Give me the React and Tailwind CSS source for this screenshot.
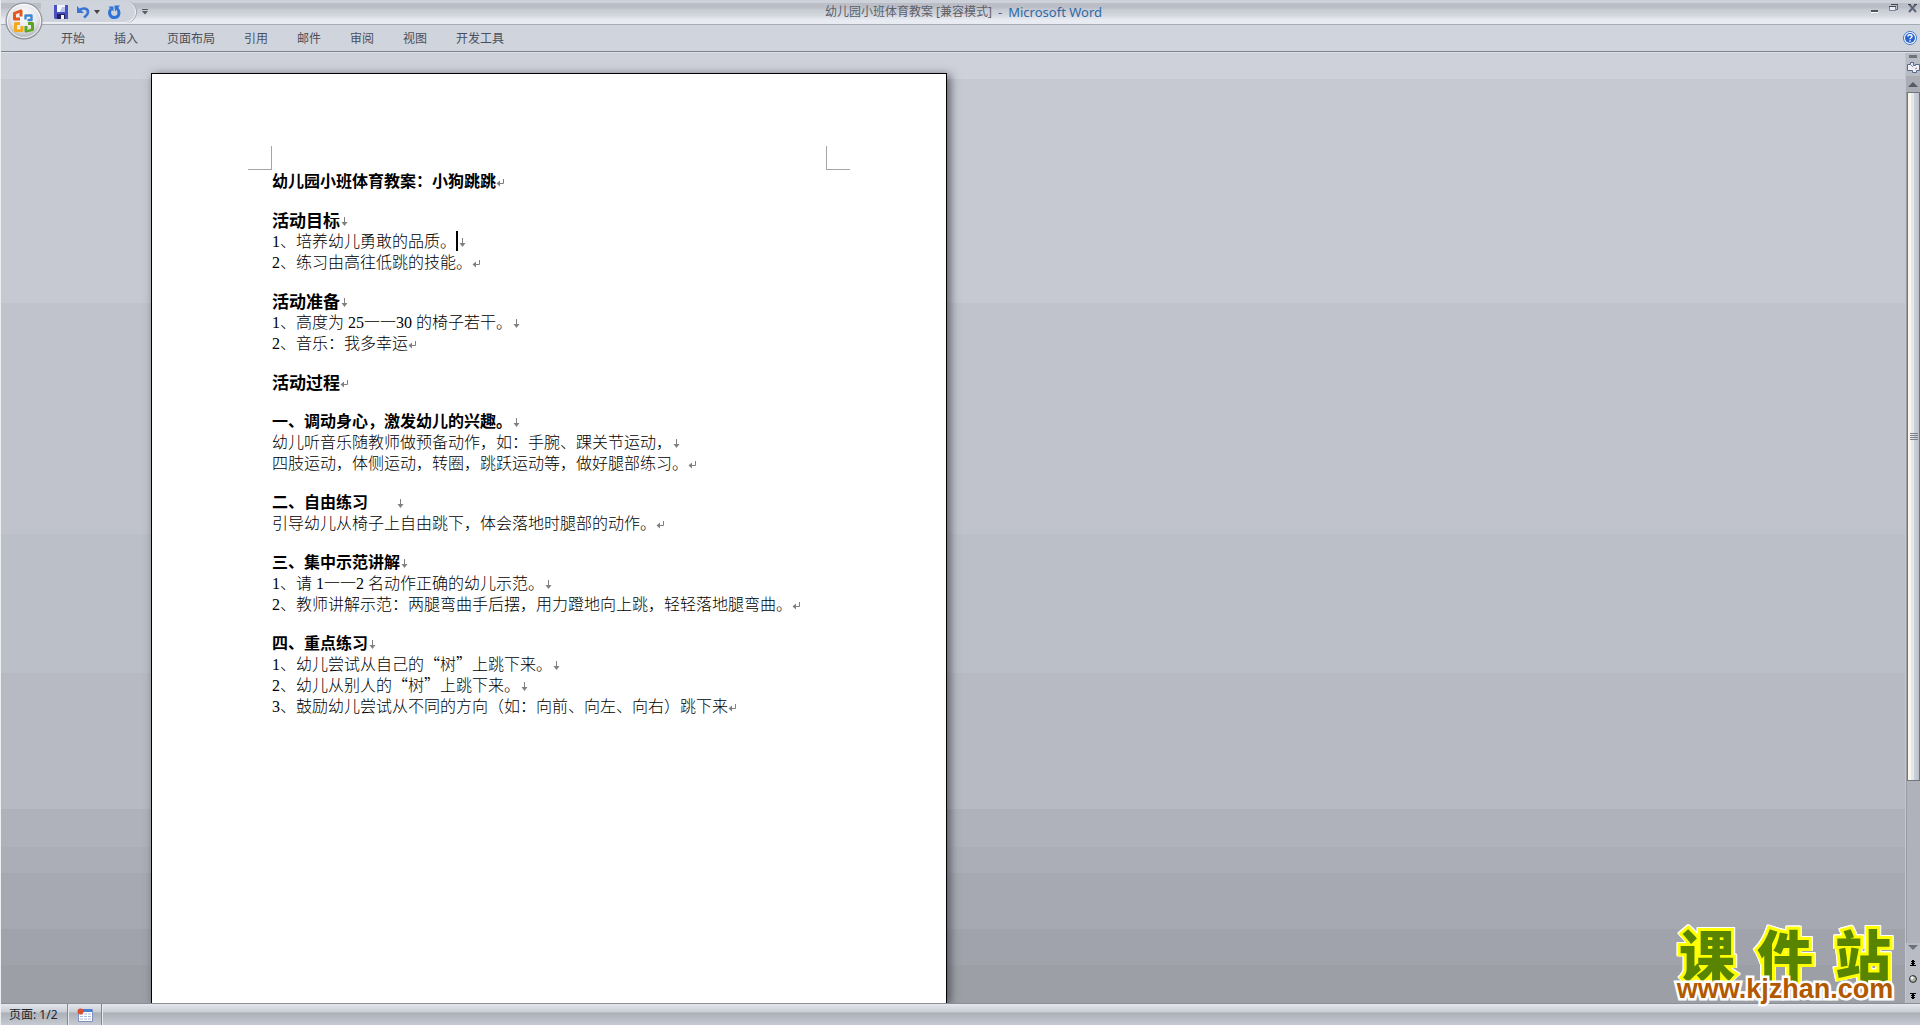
import React from 'react';

const tabs = ['开始', '插入', '页面布局', '引用', '邮件', '审阅', '视图', '开发工具'];

// mark: 'p' = paragraph end, 'br' = manual line break
const sections = [
  { lines: [{ text: '幼儿园小班体育教案：小狗跳跳', bold: true, mark: 'p' }] },
  {
    lines: [
      { text: '活动目标', bold: true, large: true, mark: 'br' },
      { text: '1、培养幼儿勇敢的品质。', caret: true, mark: 'br' },
      { text: '2、练习由高往低跳的技能。', mark: 'p' },
    ],
  },
  {
    lines: [
      { text: '活动准备', bold: true, large: true, mark: 'br' },
      { text: '1、高度为 25一一30 的椅子若干。', mark: 'br' },
      { text: '2、音乐：我多幸运', mark: 'p' },
    ],
  },
  { lines: [{ text: '活动过程', bold: true, large: true, mark: 'p' }] },
  {
    lines: [
      { text: '一、调动身心，激发幼儿的兴趣。', bold: true, mark: 'br' },
      { text: '幼儿听音乐随教师做预备动作，如：手腕、踝关节运动，', mark: 'br' },
      { text: '四肢运动，体侧运动，转圈，跳跃运动等，做好腿部练习。', mark: 'p' },
    ],
  },
  {
    lines: [
      { text: '二、自由练习', bold: true, tab: true, mark: 'br' },
      { text: '引导幼儿从椅子上自由跳下，体会落地时腿部的动作。', mark: 'p' },
    ],
  },
  {
    lines: [
      { text: '三、集中示范讲解', bold: true, mark: 'br' },
      { text: '1、请 1一一2 名动作正确的幼儿示范。', mark: 'br' },
      { text: '2、教师讲解示范：两腿弯曲手后摆，用力蹬地向上跳，轻轻落地腿弯曲。', mark: 'p' },
    ],
  },
  {
    lines: [
      { text: '四、重点练习', bold: true, mark: 'br' },
      { text: '1、幼儿尝试从自己的“树”上跳下来。', mark: 'br' },
      { text: '2、幼儿从别人的“树”上跳下来。', mark: 'br' },
      { text: '3、鼓励幼儿尝试从不同的方向（如：向前、向左、向右）跳下来', mark: 'p' },
    ],
  },
];

const Mark = ({ type }) => (
  <svg width="8" height="10" viewBox="0 0 8 10" className="mt-1 shrink-0" fill="none" stroke="#808080" aria-hidden="true">
    {type === 'p' ? (
      <>
        <path d="M7.500 1v4.500H2" />
        <path d="M4 2.500v6L0.500 5.500z" fill="#808080" stroke="none" />
      </>
    ) : (
      <>
        <path d="M4.500 0v7" />
        <path d="M1.500 5h6L4.500 9z" fill="#808080" stroke="none" />
      </>
    )}
  </svg>
);

// Latin digits and the spaces beside them use the half-width serif face
const MixedText = ({ text }) =>
  text.split(/([0-9 ]+)/).map((part, idx) =>
    /^[0-9 ]+$/.test(part) ? (
      <span key={idx} className="font-['Liberation_Serif',serif]">{part}</span>
    ) : (
      <React.Fragment key={idx}>{part}</React.Fragment>
    )
  );

const Line = ({ line }) => (
  <p
    className={`flex h-[21px] items-center whitespace-pre leading-[21px] text-black
      ${line.bold ? 'font-bold' : 'font-light'}
      ${line.large ? 'text-[17px]' : 'text-base'}`}
  >
    <span><MixedText text={line.text} /></span>
    {line.tab && <span className="w-7" />}
    {line.caret && <span className="h-5 w-0.5 bg-black" />}
    <Mark type={line.mark} />
  </p>
);

const OfficeOrb = () => (
  <button aria-label="Office" className="absolute top-0.5 left-1 z-10">
    <svg width="38" height="38" viewBox="0 0 38 38">
      <defs>
        <radialGradient id="orb" cx="50%" cy="35%" r="65%">
          <stop offset="0" stopColor="#fdfdfe" />
          <stop offset="0.600" stopColor="#e4e5e9" />
          <stop offset="1" stopColor="#a9abb2" />
        </radialGradient>
      </defs>
      <circle cx="19" cy="19" r="18" fill="url(#orb)" stroke="#85878f" />
      <circle cx="19" cy="19" r="16.500" fill="none" stroke="#fff" strokeOpacity="0.800" />
      <g fill="none" strokeWidth="3" strokeLinejoin="round">
        <path d="M15 17H9.500v-5.500L16 9v5.500" stroke="#e4561c" />
        <path d="M20.500 17.500v-4h6v4.500h-4" stroke="#3f86cf" strokeWidth="2.400" />
        <path d="M15 21.500h-4.500v7H17V24" stroke="#f4a81c" />
        <path d="M21 24v5l6.500-1.500v-6H23" stroke="#5aa51e" />
      </g>
      <path d="M11 12.500l3.500-1.300M12 27h3M22 27.500l4-.8" stroke="#fff" strokeOpacity="0.600" />
    </svg>
  </button>
);

const QuickAccess = () => (
  <div className="flex h-full items-center">
    <div className="ml-10 flex h-[22px] w-[95px] items-center rounded-r-full border-r border-b border-[#eef0f4] bg-[#cfd3dc] pl-[13px] shadow-[1px_0_0_#a3a7b1]">
      <button aria-label="保存">
        <svg width="14" height="14" viewBox="0 0 14 14">
          <path d="M0 0h14v14H1l-1-1z" fill="#4a50c0" />
          <path d="M3 0h8v7H3z" fill="#f2f5fd" />
          <path d="M8 2h3v5H6z" fill="#b8c4ea" />
          <path d="M3 9h8v5H3z" fill="#23235f" />
          <path d="M7 10h3v4H7z" fill="#f4f5fb" />
        </svg>
      </button>
      <button aria-label="撤消" className="ml-2">
        <svg width="14" height="14" viewBox="0 0 14 14">
          <path d="M3 6c3-4 9-3 9 1 0 2-2 4-4 5.500" fill="none" stroke="#3a74d4" strokeWidth="2.600" />
          <path d="M1 1v7h7z" fill="#3a74d4" />
        </svg>
      </button>
      <button aria-label="撤消列表" className="ml-1">
        <svg width="6" height="4" viewBox="0 0 6 4"><path d="M0 0h6L3 4z" fill="#444" /></svg>
      </button>
      <button aria-label="重复" className="ml-2">
        <svg width="13" height="14" viewBox="0 0 13 14">
          <path d="M3 4C0 7.500 2 12.500 6.500 12.500S12.500 7 9 3.500" fill="none" stroke="#2f72d8" strokeWidth="3" />
          <path d="M6.500 0.500h5.500L7 6.500z" fill="#2f72d8" />
          <path d="M0.500 1.500h5v5z" fill="#2f72d8" />
        </svg>
      </button>
    </div>
    <button aria-label="自定义快速访问工具栏" className="ml-1.5">
      <svg width="6" height="6" viewBox="0 0 6 6"><path d="M0 0h6v1H0zM0 2h6L3 5.500z" fill="#555962" /></svg>
    </button>
  </div>
);

const WindowButtons = () => (
  <div className="flex h-full items-start justify-end gap-2.5 pt-1 pr-[3px]">
    <button aria-label="最小化">
      <svg width="8" height="9" viewBox="0 0 8 9"><path d="M0 6h7v2H0z" fill="#4f525b" /><path d="M0 8h7v1H0z" fill="#fff" /></svg>
    </button>
    <button aria-label="还原">
      <svg width="9" height="9" viewBox="0 0 9 9">
        <path d="M2.500.5h6v5h-2" fill="none" stroke="#5d6371" />
        <path d="M.5 2.500h6v4h-6z" fill="#e9ecf3" stroke="#7b8499" />
        <path d="M0 2h7v1H0zM2 0h7v1H2z" fill="#444750" />
      </svg>
    </button>
    <button aria-label="关闭">
      <svg width="9" height="9" viewBox="0 0 9 9">
        <path d="M1 0l7 8M8 0L1 8" stroke="#5d6678" strokeWidth="2" />
        <path d="M0 .5h3M6 .5h3" stroke="#444750" />
      </svg>
    </button>
  </div>
);

const Ribbon = () => (
  <header className="relative shrink-0">
    <OfficeOrb />
    <div className="grid h-6 grid-cols-[1fr_auto_1fr] bg-[linear-gradient(#cdd1d9_0,#cdd1d9_3px,#bbbec7_3px,#bbbec7_8px,#c5c9d1_9px,#d3d6dd_15px,#e8ebf1_20px,#e8ebf1_24px)]">
      <QuickAccess />
      <h1 className="flex gap-1.5 pt-1 pl-1.5 font-['Noto_Sans','Noto_Sans_CJK_SC',sans-serif] text-xs leading-4 text-[#5c606b]">
        幼儿园小班体育教案 [兼容模式]
        <span className="text-[13px] text-[#2f6aa8]">-</span>
        <span className="text-[13px] text-[#2f6aa8]">Microsoft Word</span>
      </h1>
      <WindowButtons />
    </div>
    <nav className="flex h-7 items-center gap-[29px] border-t border-b border-t-[#a7abb4] border-b-[#7f828b] bg-[#d0d4dd] pr-[3px] pl-[60px]">
      {tabs.map((tab) => (
        <button key={tab} className="text-xs text-[#4a4f5b]">{tab}</button>
      ))}
      <button aria-label="帮助" className="ml-auto">
        <svg width="14" height="14" viewBox="0 0 14 14">
          <circle cx="7" cy="7" r="6.500" fill="#fff" stroke="#3f74c4" />
          <circle cx="7" cy="7" r="5" fill="#2a63d0" />
          <path d="M5 5.500c0-2.300 4-2.300 4 0 0 1.300-2 1.200-2 2.700M7 9.200v1.500" fill="none" stroke="#fff" strokeWidth="1.400" />
        </svg>
      </button>
    </nav>
  </header>
);

const Paper = () => (
  <article className="mt-5 ml-[150px] w-[796px] shrink-0 border border-b-0 border-black bg-white px-24 pt-[72px] shadow-[3px_2px_9px_rgba(50,52,60,0.75)]">
    <div className="flex justify-between">
      <span className="size-6 border-r border-b border-[#a5a5a5]" />
      <span className="size-6 border-b border-l border-[#a5a5a5]" />
    </div>
    <div className="flex flex-col gap-[18px] pl-6">
      {sections.map((section, idx) => (
        <section key={idx}>
          {section.lines.map((line) => (
            <Line key={line.text} line={line} />
          ))}
        </section>
      ))}
    </div>
  </article>
);

const ScrollBar = () => (
  <aside className="flex w-[15px] shrink-0 flex-col border-l border-[#c3c6ce] bg-[#b9bcc5]">
    <div className="mx-auto mt-0.5 h-[3px] w-2 shrink-0 bg-[#6f727b]" />
    <button aria-label="标尺" className="mt-0.5 flex h-4 items-center justify-center">
      <svg width="13" height="12" viewBox="0 0 13 12">
        <path d="M.5 2.500h3v-2h3v3h2v-1h4v6h-3v2h-4v-2h-5z" fill="#f3eef6" stroke="#56698c" />
        <path d="M4 3l2 2M8 7l2-1" stroke="#7386a8" />
      </svg>
    </button>
    <button aria-label="向上滚动" className="flex h-4 items-center justify-center bg-[#aaadb6]">
      <svg width="10" height="5" viewBox="0 0 10 5"><path d="M5 0l5 5H0z" fill="#565a66" /></svg>
    </button>
    <div className="flex-1 border-l border-[#999ca5] bg-[#afb2bb]">
      <div className="flex h-[81%] flex-col items-center justify-center gap-px border border-[#74767e] bg-[linear-gradient(90deg,#fdf7ea_0,#fdf7ea_3px,#e3e7ee_3px,#e3e7ee_6px,#cdd3dd_6px,#c3c8d2_9px,#b9bbc2_12px)]">
        {[0, 1, 2, 3].map((n) => (
          <span key={n} className="h-px w-2 bg-[#7c7f87]" />
        ))}
      </div>
    </div>
    <div className="flex h-[60px] flex-col items-center justify-between pt-0.5 pb-1">
      <button aria-label="向下滚动">
        <svg width="10" height="5" viewBox="0 0 10 5" className="block"><path d="M0 0h10L5 5z" fill="#6d717d" /></svg>
      </button>
      <button aria-label="前一页">
        <svg width="6" height="6" viewBox="0 0 6 6" className="block"><path d="M2 0h2v1h1v1h-1v1h1v1h-1v1h2v1H0V5h2V4H1V3h1V2H1V1h1z" /></svg>
      </button>
      <button aria-label="选择浏览对象">
        <svg width="8" height="8" viewBox="0 0 8 8" className="block"><circle cx="4" cy="4" r="3.400" fill="#b5b5af" stroke="#222" /><circle cx="3" cy="3" r="1.400" fill="#fff" /></svg>
      </button>
      <button aria-label="下一页">
        <svg width="6" height="6" viewBox="0 0 6 6" className="block"><path d="M0 0h6v1H4v1h1v1H4v1h1v1H4v1H2V5H1V4h1V3H1V2h1V1H0z" /></svg>
      </button>
    </div>
  </aside>
);

const Watermark = () => (
  <div className="absolute right-[21px] bottom-0 z-10 w-[228px]">
    <div className="flex justify-between px-2 font-['Noto_Sans_CJK_SC',sans-serif] text-[56px] leading-[56px] font-black text-[#588400] [-webkit-text-stroke:6px_#ffff00] [filter:drop-shadow(1px_0_0_#fff)_drop-shadow(-1px_0_0_#fff)_drop-shadow(0_-1px_0_#fff)] [paint-order:stroke]">
      <span>课</span>
      <span>件</span>
      <span>站</span>
    </div>
    <a
      href="#kjzhan"
      className="relative -mt-1.5 block text-center font-['Liberation_Sans',sans-serif] text-[27px] leading-7 font-bold text-[#b25900] [-webkit-text-stroke:5px_#ffffff] [paint-order:stroke]"
    >
      www.kjzhan.com
    </a>
  </div>
);

const StatusBar = () => (
  <footer className="flex h-[22px] shrink-0 border-t border-[#8b8e96] bg-[linear-gradient(#e4e7ec_0,#c8ccd4_8px,#abafb8_9px,#c6cad2_21px)] text-xs text-[#22242a]">
    <button className="w-[67px] border-r border-[#84878f] pl-2 text-left font-['Noto_Sans','Noto_Sans_CJK_SC',sans-serif] leading-5">页面: 1/2</button>
    <button aria-label="宏" className="flex w-[34px] items-center justify-center border-r border-l border-r-[#84878f] border-l-[#e4e7ec]">
      <svg width="16" height="14" viewBox="0 0 16 14">
        <path d="M1.500 1.500h14v12h-14z" fill="#fff" stroke="#7d92bd" />
        <path d="M2 1h13v3H2z" fill="#4b7fd1" />
        <path d="M3 6h11M3 8.500h11M3 11h11" stroke="#a8b9dc" strokeDasharray="3 1" />
        <circle cx="3.500" cy="3.500" r="3" fill="#d9512c" />
      </svg>
    </button>
    <div className="flex-1 border-l border-[#e4e7ec]" />
  </footer>
);

const App = () => (
  <div className="flex h-screen flex-col overflow-hidden border-l border-[#eceef2] font-['Noto_Sans_CJK_SC',sans-serif]">
    <Ribbon />
    <div className="relative flex min-h-0 flex-1 border-t border-[#dde0e7]">
      <main className="flex min-w-0 flex-1 overflow-hidden bg-[linear-gradient(#ced1da_0,#ced1da_26px,#c6c9d2_26px,#c6c9d2_250px,#c0c3cc_250px,#c0c3cc_481px,#bbbfc8_481px,#bbbfc8_620px,#b7bac3_620px,#b7bac3_756px,#afb2bb_756px,#afb2bb_794px,#abaeb6_794px,#abaeb6_820px,#a6a9b1_820px,#a6a9b1_876px,#a0a3ab_876px,#a0a3ab_912px,#9ca0a6_912px)]">
        <Paper />
      </main>
      <ScrollBar />
      <Watermark />
    </div>
    <StatusBar />
  </div>
);

export default App;
